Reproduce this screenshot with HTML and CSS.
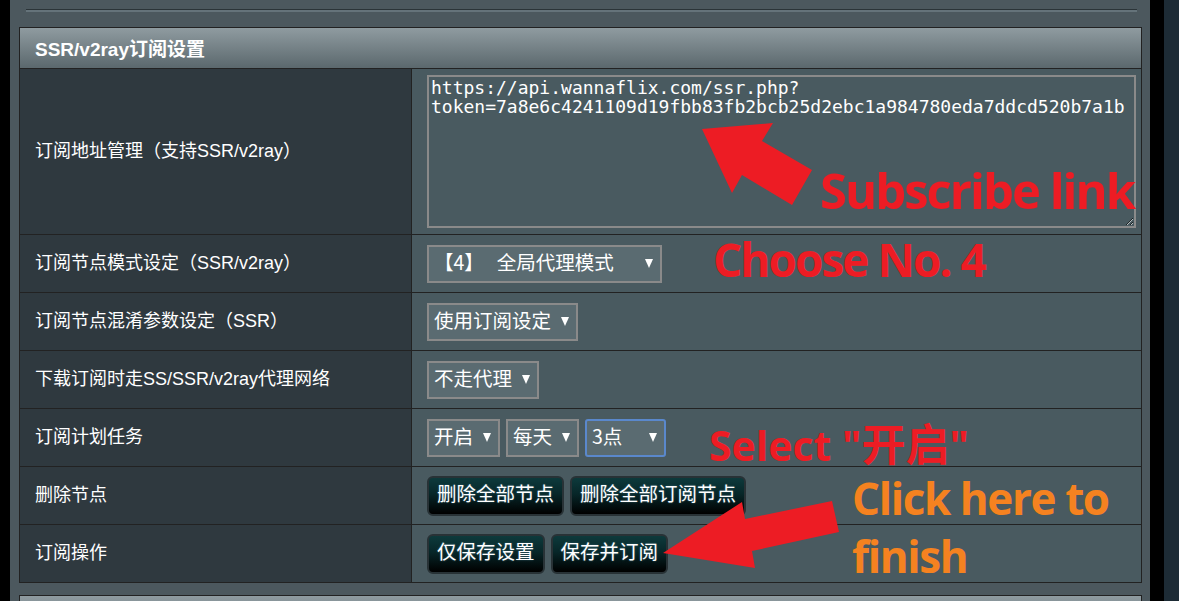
FILE: index.html
```html
<!DOCTYPE html>
<html lang="zh-CN">
<head>
<meta charset="utf-8">
<title>SSR/v2ray订阅设置</title>
<link rel="stylesheet" href="styles.css">
</head>
<body>
<div class="frame">
  <div class="edge-left"></div>
  <main class="main">
    <div class="rule"></div>
    <section class="panel">
      <div class="panel-head">SSR/v2ray订阅设置</div>
      <div class="row row-tall">
        <div class="label">订阅地址管理（支持SSR/v2ray）</div>
        <div class="value"><textarea class="url" spellcheck="false">https://api.wannaflix.com/ssr.php?
token=7a8e6c4241109d19fbb83fb2bcb25d2ebc1a984780eda7ddcd520b7a1b</textarea></div>
      </div>
      <div class="row">
        <div class="label">订阅节点模式设定（SSR/v2ray）</div>
        <div class="value">
          <div class="select select-mode"><span class="opt"><span>【4】</span><span class="opt-gap">全局代理模式</span></span><span class="caret"></span></div>
        </div>
      </div>
      <div class="row">
        <div class="label">订阅节点混淆参数设定（SSR）</div>
        <div class="value">
          <div class="select"><span class="opt">使用订阅设定</span><span class="caret"></span></div>
        </div>
      </div>
      <div class="row">
        <div class="label">下载订阅时走SS/SSR/v2ray代理网络</div>
        <div class="value">
          <div class="select"><span class="opt">不走代理</span><span class="caret"></span></div>
        </div>
      </div>
      <div class="row">
        <div class="label">订阅计划任务</div>
        <div class="value">
          <div class="select"><span class="opt">开启</span><span class="caret"></span></div>
          <div class="select"><span class="opt">每天</span><span class="caret"></span></div>
          <div class="select select-hour"><span class="opt">3点</span><span class="caret"></span></div>
        </div>
      </div>
      <div class="row">
        <div class="label">删除节点</div>
        <div class="value">
          <button class="btn">删除全部节点</button>
          <button class="btn">删除全部订阅节点</button>
        </div>
      </div>
      <div class="row">
        <div class="label">订阅操作</div>
        <div class="value">
          <button class="btn">仅保存设置</button>
          <button class="btn">保存并订阅</button>
        </div>
      </div>
    </section>
    <section class="panel panel-next">
      <div class="panel-head"></div>
    </section>
  </main>
  <div class="edge-black"></div>
  <div class="edge-navy"></div>
</div>

<svg class="arrows" width="1179" height="601" viewBox="0 0 1179 601" aria-hidden="true">
  <polygon points="702,129 773,123 762,141 812,170 792,205 742,175 732,193" fill="#ed1c24"/>
  <polygon points="663,553 742,502 745,519 832,501 839,532 752,551 755,568" fill="#ed1c24"/>
</svg>

<div class="note note-sub">Subscribe link</div>
<div class="note note-choose">Choose No. 4</div>
<div class="note note-select">Select "<span class="cjk">开启</span>"</div>
<div class="note note-click">Click here to<br>finish</div>
</body>
</html>
```

FILE: styles.css
```css
* {
  box-sizing: border-box;
}

html,
body {
  margin: 0;
  height: 601px;
  overflow: hidden;
  background: #4c585e;
}

body {
  position: relative;
  font-family: "Liberation Sans", "Noto Sans CJK SC", sans-serif;
  color: #fff;
}

.frame {
  display: flex;
  height: 601px;
  overflow: hidden;
}

.edge-left {
  flex: none;
  width: 10px;
  background: #000;
}

.main {
  flex: none;
  width: 1140px;
  padding-top: 9px;
  background: #4c585e;
  overflow: hidden;
}

.edge-black {
  flex: none;
  width: 14px;
  background: #000;
}

.edge-navy {
  flex: none;
  width: 15px;
  background: #1d2b35;
}

.rule {
  margin-left: 16px;
  width: 1111px;
  height: 3px;
  border-top: 1px solid #2b3438;
  background: #65737a;
}

.panel {
  margin: 15px 0 0 9px;
  width: 1123px;
  border: 1px solid #222;
}

.panel-head {
  display: flex;
  align-items: center;
  height: 41px;
  padding-left: 15px;
  padding-bottom: 2px;
  border-bottom: 1px solid #222;
  background: linear-gradient(#8f9ba0, #5b686d);
  font-size: 19px;
  font-weight: bold;
  color: #fff;
}

.panel-next {
  margin-top: 12px;
  height: 6px;
  border-bottom: 0;
  overflow: hidden;
}

.row {
  display: flex;
  height: 58px;
  border-bottom: 1px solid #222;
}

.row-tall {
  height: 166px;
}

.row:last-child {
  height: 57px;
  border-bottom: 0;
}

.label {
  display: flex;
  align-items: center;
  flex: none;
  width: 392px;
  padding: 0 0 6px 15px;
  border-right: 1px solid #222;
  background: #2f393f;
  font-size: 18px;
  color: #fff;
}

.value {
  display: flex;
  align-items: center;
  gap: 6px;
  flex: 1;
  padding-left: 15px;
  background: #495a60;
}

.url {
  display: block;
  width: 709px;
  height: 153px;
  margin: 0;
  padding: 1px 2px;
  border: 2px solid #8a8a8a;
  background: #495a60;
  color: #fff;
  font-family: "DejaVu Sans Mono", "Liberation Mono", monospace;
  font-size: 18px;
  line-height: 19px;
  white-space: pre;
  overflow: hidden;
  resize: both;
  outline: none;
}

.select {
  display: inline-flex;
  align-items: center;
  gap: 10px;
  height: 38px;
  padding: 0 7px 0 5px;
  border: 2px solid #8a8a8a;
  background: #5a6b71;
  font-family: "Noto Sans CJK SC", "Liberation Sans", sans-serif;
  font-size: 19.5px;
  color: #fff;
}

.select-mode {
  width: 235px;
  justify-content: space-between;
}

.select-hour {
  width: 81px;
  justify-content: space-between;
  border-color: #5a88cc;
  border-radius: 3px;
}

.opt {
  display: inline-flex;
  align-items: center;
  padding-bottom: 5px;
  white-space: nowrap;
}

.opt-gap {
  margin-left: 13px;
}

.caret {
  flex: none;
  width: 0;
  height: 0;
  border-left: 4.5px solid transparent;
  border-right: 4.5px solid transparent;
  border-top: 9px solid #fff;
}

.btn {
  height: 40px;
  margin: 0;
  padding: 0 8px 5px;
  border: 2px solid #283236;
  border-radius: 6px;
  background: linear-gradient(#0d3a3c 0%, #072628 45%, #000 100%);
  color: #fff;
  font-family: "Noto Sans CJK SC", "Liberation Sans", sans-serif;
  font-size: 19.5px;
  line-height: 1;
  text-shadow: 0 0 2px #3c6a7a;
}

.arrows {
  position: absolute;
  top: 0;
  left: 0;
  pointer-events: none;
}

.note {
  position: absolute;
  font-family: "Open Sans", "Noto Sans CJK SC", sans-serif;
  font-weight: 700;
  line-height: 1;
  white-space: nowrap;
}

.note-sub {
  left: 820px;
  top: 166px;
  font-size: 49px;
  letter-spacing: -2px;
  color: #ed1c24;
}

.note-choose {
  left: 713px;
  top: 236px;
  font-size: 46px;
  letter-spacing: -2px;
  color: #ed1c24;
}

.note-select {
  left: 709px;
  top: 420px;
  font-size: 41px;
  color: #ed1c24;
}

.note-select .cjk {
  font-family: "Noto Sans CJK SC", sans-serif;
  font-size: 44px;
  line-height: 1;
}

.note-click {
  left: 852px;
  top: 469px;
  font-size: 44px;
  line-height: 58px;
  letter-spacing: -1.4px;
  color: #f58220;
}
```
